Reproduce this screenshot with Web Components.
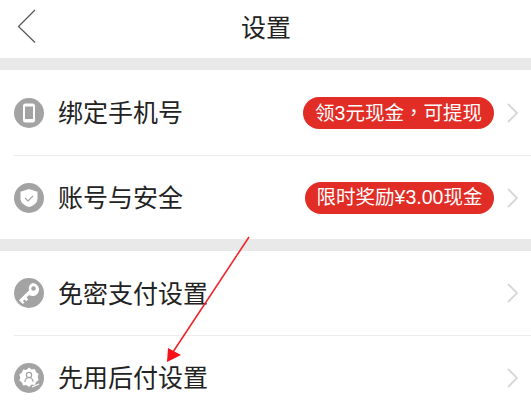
<!DOCTYPE html>
<html>
<head>
<meta charset="utf-8">
<style>
    html,body{margin:0;padding:0;background:#fff;overflow:hidden}
    body{width:531px;height:407px;position:relative;font-family:"Noto Sans CJK SC","Liberation Sans",sans-serif}
    .arrow{position:absolute;left:0;top:0;z-index:5}
</style>
</head>
<body>
<set-header>设置</set-header>
<set-group style="--row:86px">
    <set-row pill="领3元现金，可提现" w="191">
        <svg slot="icon" viewBox="0 0 30 30" width="30" height="30"><circle cx="15" cy="15" r="15" fill="#a3a3a3"/><rect x="9" y="5.500" width="12" height="19" rx="2.500" fill="#fff"/><rect x="11" y="8.500" width="8" height="12.500" fill="#a3a3a3"/></svg>
        绑定手机号
    </set-row>
    <set-row pill="限时奖励¥3.00现金" w="189" last>
        <svg slot="icon" viewBox="0 0 30 30" width="30" height="30"><circle cx="15" cy="15" r="15" fill="#a3a3a3"/><path d="M15 6l8.500 2.800v6.700c0 4.200-3.700 7-8.500 8.500-4.800-1.500-8.500-4.300-8.500-8.500V8.800z" fill="#fff"/><path d="M11 15l3 3 5-5" fill="none" stroke="#a3a3a3" stroke-width="1.100"/></svg>
        账号与安全
    </set-row>
</set-group>
<set-group style="--row:85px">
    <set-row>
        <svg slot="icon" viewBox="0 0 30 30" width="30" height="30"><circle cx="15" cy="15" r="15" fill="#a3a3a3"/><path d="M18.500 5a6.500 6.500 0 0 1 1.200 12.900 6.500 6.500 0 0 1-4.700-1l-2.500 2.500 1.800 1.800-2.100 2.100-1.800-1.800-1.500 1.500 1.600 1.600-1.700 1.500-3.800-3.800 10-9.900A6.500 6.500 0 0 1 18.500 5z" fill="#fff"/><circle cx="19.500" cy="10.500" r="2.200" fill="#a3a3a3"/></svg>
        免密支付设置
    </set-row>
    <set-row last>
        <svg slot="icon" viewBox="0 0 30 30" width="30" height="30"><circle cx="15" cy="15" r="15" fill="#a3a3a3"/><path d="M15 4.500l2.700 1.900 3.200-.4 1.100 3.100 2.700 1.800-1 3.100 1 3.100-2.700 1.800-1.100 3.100-3.200-.4L15 24l-2.700-1.900-3.200.4L8 19.400l-2.700-1.800 1-3.100-1-3.100L8 9.600l1.100-3.100 3.200.4z" fill="#fff"/><circle cx="15" cy="12" r="2.600" fill="none" stroke="#a3a3a3" stroke-width="1.200"/><path d="M10.800 19c.5-3 2.200-4.500 4.200-4.500s3.700 1.500 4.200 4.500" fill="none" stroke="#a3a3a3" stroke-width="1.200"/><path d="M18 24l7-3" stroke="#fff" stroke-width="1.200"/></svg>
        先用后付设置
    </set-row>
</set-group>

<svg class="arrow" width="531" height="407" viewBox="0 0 531 407">
    <path d="M249 237L173 352" stroke="#f0262a" stroke-width="1.600" fill="none"/>
    <path d="M167 362L168 348L181 355z" fill="#f5121a"/>
</svg>

<script>
const set_header = document.createElement('template');
set_header.innerHTML = `
    <style>
        :host{display:flex;height:58px;align-items:center;justify-content:center;position:relative;background:#fff}
        .back{position:absolute;left:17px;top:9px}
        .title{font-size:25px;line-height:52px;color:#222;padding:0 0 6px 1px}
    </style>
    <svg class="back" width="19" height="35" viewBox="0 0 19 35"><path d="M18 1L1.500 17.500L18 33.500" fill="none" stroke="#555" stroke-width="1.200"/></svg>
    <div class="title"><slot></slot></div>
`;

class SetHeader extends HTMLElement {
    constructor() {
        super();
        this.attachShadow({ mode: 'open' });
        this.shadowRoot.appendChild(set_header.content.cloneNode(true));
    }
}

const set_group = document.createElement('template');
set_group.innerHTML = `
    <style>
        :host{display:block;border-top:12px solid #e9e9e9;background:#fff}
    </style>
    <slot></slot>
`;

class SetGroup extends HTMLElement {
    constructor() {
        super();
        this.attachShadow({ mode: 'open' });
        this.shadowRoot.appendChild(set_group.content.cloneNode(true));
    }
}

const set_row = document.createElement('template');
set_row.innerHTML = `
    <style>
        :host{display:block;padding-left:14px}
        .row{display:flex;align-items:center;height:var(--row);border-bottom:1px solid #ececec;box-sizing:border-box;padding-right:13px}
        :host([last]) .row{border-bottom:none;height:83px}
        .icon{display:flex;width:30px;height:30px;margin-right:14px}
        .label{flex:1;font-size:25px;line-height:34px;padding-bottom:3px;color:#222;white-space:nowrap}
        .pill{height:32px;line-height:30px;border-radius:16px;background:#e12d26;color:#fff;font-family:"Liberation Sans","Noto Sans CJK SC",sans-serif;font-size:19.5px;text-align:center;white-space:nowrap;margin-right:13px;box-sizing:border-box}
        .pill:empty{display:none}
        .comma{font-family:"Noto Sans CJK TC",sans-serif}
        .chev{display:block}
    </style>
    <div class="row">
        <div class="icon"><slot name="icon"></slot></div>
        <div class="label"><slot></slot></div>
        <div class="pill"></div>
        <svg class="chev" width="11" height="20" viewBox="0 0 11 20"><path d="M1 1l9 9l-9 9" fill="none" stroke="#d6d6d6" stroke-width="1.800"/></svg>
    </div>
`;

class SetRow extends HTMLElement {
    constructor() {
        super();
        this.attachShadow({ mode: 'open' });
        this.shadowRoot.appendChild(set_row.content.cloneNode(true));
    }

    connectedCallback() {
        let pill = this.shadowRoot.querySelector('.pill');
        if (this.getAttribute('pill')) {
            pill.innerHTML = this.getAttribute('pill').replace('，', '<span class="comma">，</span>');
            pill.style.width = this.getAttribute('w') + 'px';
        }
    }
}

window.customElements.define('set-header', SetHeader);
window.customElements.define('set-group', SetGroup);
window.customElements.define('set-row', SetRow);
</script>
</body>
</html>
